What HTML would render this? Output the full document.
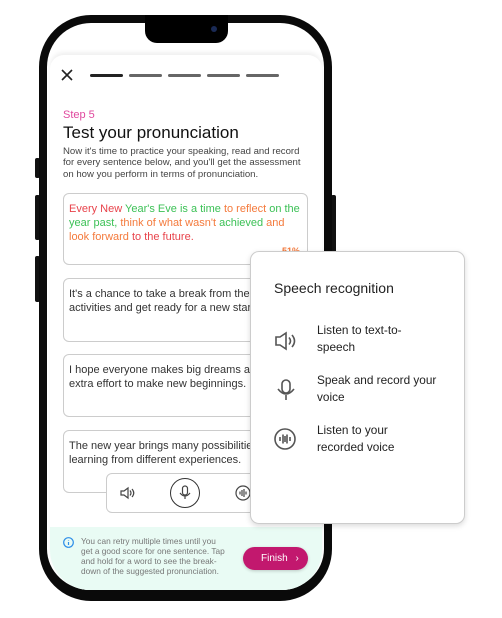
<!DOCTYPE html>
<html><head><style>
*{margin:0;padding:0;box-sizing:border-box}
body{width:502px;height:618px;background:#fff;position:relative;overflow:hidden;font-family:"Liberation Sans",sans-serif;color:#222}
.abs{position:absolute}
.phone{left:39px;top:15px;width:293px;height:586px;background:#fff;border:8px solid #0a0a0a;border-bottom-width:11px;border-radius:52px}
.screen{left:50px;top:55px;width:272px;height:535px;background:#fff;border-radius:14px 14px 40px 40px;overflow:hidden;box-shadow:0 -3px 4px rgba(0,0,0,.06)}
.notch{left:145px;top:15px;width:83px;height:28px;background:#000;border-radius:0 0 12px 12px}
.bar{top:74px;height:3px;width:33px;border-radius:2px;background:#666}
.card{left:63px;width:245px;border:1px solid #ccc;border-radius:6px;background:#fff;padding:8px 5px;font-size:11px;line-height:14px;color:#333;white-space:nowrap;overflow:hidden}
.pop{left:250px;top:251px;width:215px;height:273px;background:#fff;border:1px solid #ccc;border-radius:9px;box-shadow:0 2px 6px rgba(0,0,0,.15)}
.it{position:absolute;left:66px;font-size:11.8px;line-height:17px;color:#222}
.btn{background:#111;border-radius:2px}
</style></head><body>
<div class="abs btn" style="left:35px;top:158px;width:5px;height:20px"></div>
<div class="abs btn" style="left:35px;top:195px;width:5px;height:45px"></div>
<div class="abs btn" style="left:35px;top:256px;width:5px;height:46px"></div>
<div class="abs btn" style="left:331px;top:195px;width:5px;height:60px"></div>
<div class="abs phone"></div>
<div class="abs screen">
 <div class="abs" style="left:0;top:472px;width:272px;height:63px;background:#e9fbf4"></div>
</div>
<div class="abs notch"></div>
<div class="abs" style="left:211px;top:26px;width:6px;height:6px;border-radius:50%;background:#1a2a55"></div>
<svg class="abs" style="left:61px;top:69px" width="12" height="12"><path d="M1 1L11 11M11 1L1 11" stroke="#222" stroke-width="1.6"/></svg>
<div class="abs bar" style="left:90px;background:#222"></div>
<div class="abs bar" style="left:129px"></div>
<div class="abs bar" style="left:168px"></div>
<div class="abs bar" style="left:207px"></div>
<div class="abs bar" style="left:246px"></div>
<div class="abs" style="left:63px;top:109px;font-size:11px;color:#e0489e">Step 5</div>
<div class="abs" style="left:63px;top:123px;font-size:17px;color:#111">Test your pronunciation</div>
<div class="abs" style="left:63px;top:146px;white-space:nowrap;font-size:9.6px;line-height:11.3px;color:#444">Now it's time to practice your speaking, read and record<br>for every sentence below, and you'll get the assessment<br>on how you perform in terms of pronunciation.</div>
<div class="abs card" style="top:193px;height:72px"><span style="color:#e8434b">Every New </span><span style="color:#3cc156">Year's Eve is a time </span><span style="color:#f47a3c">to reflect </span><span style="color:#3cc156">on the<br>year past, </span><span style="color:#f47a3c">think of what wasn't </span><span style="color:#3cc156">achieved </span><span style="color:#f47a3c">and<br>look forward </span><span style="color:#e8434b">to the future.</span>
<div class="abs" style="left:218px;top:50px;font-size:9px;font-weight:bold;color:#f47a3c">51%</div></div>
<div class="abs card" style="top:278px;height:64px">It's a chance to take a break from the daily<br>activities and get ready for a new start.</div>
<div class="abs card" style="top:354px;height:63px">I hope everyone makes big dreams and put<br>extra effort to make new beginnings.</div>
<div class="abs card" style="top:430px;height:63px">The new year brings many possibilities for<br>learning from different experiences.</div>
<div class="abs" style="left:106px;top:473px;width:160px;height:40px;background:#fff;border:1px solid #ccc;border-radius:6px"></div>
<svg class="abs" style="left:119px;top:485px" width="16" height="16" fill="none" stroke="#444" stroke-width="1.2"><path d="M2 6h3l4-3v10l-4-3H2z"/><path d="M11 5.5q2 2.5 0 5M13 4q3.5 4 0 8"/></svg>
<div class="abs" style="left:170px;top:478px;width:30px;height:30px;border:1.2px solid #333;border-radius:50%"></div>
<svg class="abs" style="left:178px;top:485px" width="14" height="16" fill="none" stroke="#444" stroke-width="1.2"><rect x="4.5" y="1" width="5" height="9" rx="2.5"/><path d="M2 8q5 6 10 0M7 11v3"/></svg>
<svg class="abs" style="left:235px;top:485px" width="16" height="16" fill="none" stroke="#444" stroke-width="1.2"><circle cx="8" cy="8" r="7"/><path d="M5 6.5v3M7 5v6M9 4v8M11 6.5v3"/></svg>
<svg class="abs" style="left:63px;top:537px" width="11" height="11" fill="none" stroke="#2d8ee8" stroke-width="1.2"><circle cx="5.5" cy="5.5" r="4.8"/><path d="M5.5 5v3M5.5 3v.5"/></svg>
<div class="abs" style="left:81px;top:536px;white-space:nowrap;font-size:8.3px;line-height:10px;color:#777">You can retry multiple times until you<br>get a good score for one sentence. Tap<br>and hold for a word to see the break-<br>down of the suggested pronunciation.</div>
<div class="abs" style="left:243px;top:547px;width:65px;height:23px;border-radius:12px;background:#c2186e;color:#fff;font-size:10px;line-height:23px;padding-left:18px;box-shadow:0 1px 3px rgba(0,0,0,.2)">Finish <span style="margin-left:5px">›</span></div>
<div class="abs pop">
 <div class="abs" style="left:23px;top:28px;font-size:14px;color:#222">Speech recognition</div>
 <svg class="abs" style="left:22px;top:77px" width="24" height="24" fill="none" stroke="#555" stroke-width="1.6"><path d="M3 8h4l6-4v16l-6-4H3z"/><path d="M16 8.5q3 3.5 0 7M19 6q5 6 0 12"/></svg>
 <svg class="abs" style="left:25px;top:126px" width="20" height="24" fill="none" stroke="#555" stroke-width="1.6"><rect x="6" y="2" width="8" height="13" rx="4"/><path d="M2 11q8 10 16 0M10 17v5"/></svg>
 <svg class="abs" style="left:22px;top:175px" width="24" height="24" fill="none" stroke="#555" stroke-width="1.6"><circle cx="12" cy="12" r="10"/><path d="M7 10v4M10 7.5v9M12 9v6M14 7.5v9M17 10v4"/></svg>
 <div class="it" style="top:70px">Listen to text-to-<br>speech</div>
 <div class="it" style="top:120px">Speak and record your<br>voice</div>
 <div class="it" style="top:170px">Listen to your<br>recorded voice</div>
</div>
</body></html>
